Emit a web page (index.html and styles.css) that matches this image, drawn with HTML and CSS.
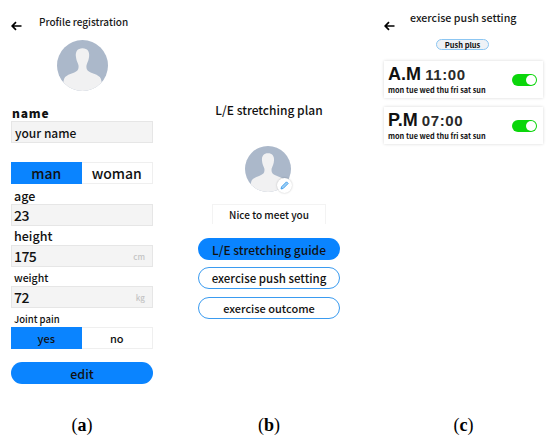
FILE: index.html
```html
<!DOCTYPE html>
<html lang="en">
<head>
    <meta charset="UTF-8">
    <meta name="viewport" content="width=device-width, initial-scale=1.0">
    <title>Stretching app screens</title>
    <link rel="stylesheet" href="styles.css">
</head>
<body>
    <div class="figure">
        <!-- (a) profile -->
        <section class="panel panel-a">
            <div class="top-bar">
                <svg class="back" viewBox="0 0 11 10"><path d="M10.5 5H1.5M5 1.2L1.2 5L5 8.8" fill="none" stroke="#000" stroke-width="1.7"/></svg>
                <h2 class="top-title">Profile registration</h2>
            </div>
            <svg class="avatar avatar-big" viewBox="0 0 50 50">
                <use href="#person"></use>
            </svg>
            <label class="lbl lbl-name">name</label>
            <div class="field field-text">your name</div>
            <div class="toggle toggle-big">
                <span class="on">man</span>
                <span>woman</span>
            </div>
            <label class="lbl lbl-age">age</label>
            <div class="field">23</div>
            <label class="lbl lbl-height">height</label>
            <div class="field">175<span class="unit">cm</span></div>
            <label class="lbl lbl-weight">weight</label>
            <div class="field">72<span class="unit">kg</span></div>
            <label class="lbl lbl-joint">Joint pain</label>
            <div class="toggle toggle-small">
                <span class="on">yes</span>
                <span>no</span>
            </div>
            <button class="pill pill-on pill-edit">edit</button>
            <p class="caption">(<b>a</b>)</p>
        </section>

        <!-- (b) plan menu -->
        <section class="panel panel-b">
            <h2 class="plan-title">L/E stretching plan</h2>
            <div class="avatar-wrap">
                <svg class="avatar avatar-mid" viewBox="0 0 50 50">
                    <use href="#person"></use>
                </svg>
                <span class="edit-badge">
                    <svg viewBox="0 0 12 12"><path d="M2.2 9.8L2.8 7.4L8.2 2L10 3.8L4.6 9.2Z" fill="#9cd0f7" stroke="#3f9bea" stroke-width="1"/></svg>
                </span>
            </div>
            <div class="greeting">Nice to meet you</div>
            <button class="pill pill-on">L/E stretching guide</button>
            <button class="pill pill-line">exercise push setting</button>
            <button class="pill pill-line pill-narrow">exercise outcome</button>
            <p class="caption">(<b>b</b>)</p>
        </section>

        <!-- (c) push setting -->
        <section class="panel panel-c">
            <div class="top-bar top-bar-c">
                <svg class="back" viewBox="0 0 11 10"><path d="M10.5 5H1.5M5 1.2L1.2 5L5 8.8" fill="none" stroke="#000" stroke-width="1.7"/></svg>
                <h2 class="top-title">exercise push setting</h2>
            </div>
            <span class="push-plus">Push plus</span>
            <div class="alarm">
                <div>
                    <div class="alarm-time"><b>A.M</b> <span>11:00</span></div>
                    <div class="alarm-days">mon tue wed thu fri sat sun</div>
                </div>
                <span class="switch"></span>
            </div>
            <div class="alarm">
                <div>
                    <div class="alarm-time"><b>P.M</b> <span>07:00</span></div>
                    <div class="alarm-days">mon tue wed thu fri sat sun</div>
                </div>
                <span class="switch"></span>
            </div>
            <p class="caption">(<b>c</b>)</p>
        </section>
    </div>

    <svg class="defs" width="0" height="0">
        <defs>
            <g id="person">
                <clipPath id="round"><circle cx="25" cy="25" r="25"/></clipPath>
                <circle cx="25" cy="25" r="25" fill="#abb8ca"/>
                <path clip-path="url(#round)" d="M25 8C20 8 18 11.500 18.500 16C18.800 19 19.500 21 20.500 23C21.500 25 21.500 28 20 30C17 33 9 33.500 7 38C6 41 6 44 6 50H44C44 44 44 41 43 38C41 33.500 33 33 30 30C28.500 28 28.500 25 29.500 23C30.500 21 31.200 19 31.500 16C32 11.500 30 8 25 8Z" fill="#f1f1f2"/>
            </g>
        </defs>
    </svg>
</body>
</html>
```

FILE: styles.css
```css
body {
    margin: 0;
    background: #fff;
    color: #111;
    font-family: 'Noto Sans CJK KR', 'Noto Sans', sans-serif;
}

.figure {
    display: flex;
    height: 441px;
    overflow: hidden;
    padding-left: 11px;
}

.panel {
    display: flex;
    flex-direction: column;
    height: 441px;
    box-sizing: border-box;
}

.panel-a {
    width: 142px;
}

.panel-b {
    width: 142px;
    margin-left: 45px;
    padding-top: 100px;
    align-items: center;
}

.panel-c {
    width: 159px;
    margin-left: 44px;
}

.caption {
    margin: auto 0 0;
    padding-bottom: 5px;
    align-self: center;
    font-family: 'Liberation Serif', serif;
    font-size: 18px;
    line-height: 22px;
    color: #000;
}

.top-bar {
    display: flex;
    height: 34px;
    flex-shrink: 0;
}

.back {
    width: 11px;
    height: 10px;
    margin-top: 21px;
}

.top-title {
    margin: 14px 0 0 17px;
    font-size: 10px;
    line-height: 16px;
    font-weight: 500;
    white-space: nowrap;
    color: #1a1a1a;
}

.top-bar-c {
    height: 39px;
}

.top-bar-c .top-title {
    margin: 10px 0 0 15px;
    font-size: 10.700px;
}

.avatar {
    display: block;
    flex-shrink: 0;
}

.avatar-big {
    width: 51px;
    height: 51px;
    margin: 6px 0 0 46px;
}

.lbl {
    display: block;
    font-weight: 500;
    line-height: 16px;
    height: 16px;
    padding-left: 3px;
}

.lbl-name {
    margin-top: 14px;
    padding-left: 1px;
    font-size: 12px;
    font-weight: 900;
    letter-spacing: .8px;
}

.lbl-age, .lbl-height {
    margin-top: 3px;
    font-size: 12.500px;
}

.lbl-age {
    margin-top: 4px;
}

.lbl-height {
    line-height: 14px;
}

.lbl-weight {
    margin-top: 3px;
    font-size: 10.500px;
}

.lbl-joint {
    margin-top: 3px;
    font-size: 9.500px;
}

.field {
    display: flex;
    justify-content: space-between;
    align-items: center;
    height: 22px;
    box-sizing: border-box;
    padding: 0 7px 0 2px;
    background: #f4f4f4;
    border: 1px solid #e6e6e6;
    font-size: 14px;
    font-weight: 500;
    letter-spacing: -.6px;
}

.field-text {
    padding-left: 3px;
    font-size: 12px;
    letter-spacing: 0;
}

.unit {
    font-size: 8px;
    letter-spacing: 0;
    color: #c4c4c4;
}

.toggle {
    display: flex;
    height: 22px;
    box-sizing: border-box;
    background: #fff;
    border: 1px solid #efefef;
    font-weight: 500;
}

.toggle span {
    flex: 1;
    text-align: center;
    line-height: 20px;
}

.toggle .on {
    margin: -1px 0 -1px -1px;
    background: #0a84ff;
    line-height: 22px;
}

.toggle-big {
    margin-top: 19px;
    font-size: 14px;
}

.toggle-small {
    font-size: 11px;
}

.pill {
    display: block;
    width: 142px;
    height: 22px;
    flex-shrink: 0;
    box-sizing: border-box;
    padding: 0;
    border-radius: 11px;
    font-family: inherit;
    font-size: 11.500px;
    font-weight: 500;
    color: #111;
    white-space: nowrap;
}

.pill-on {
    background: #0a84ff;
    border: none;
}

.pill-line {
    margin-top: 7px;
    background: #fff;
    border: 1.500px solid #3a9bf0;
}

.pill-narrow {
    margin-top: 8px;
    font-size: 11px;
}

.pill-edit {
    margin-top: 13px;
    font-size: 12.500px;
}

.plan-title {
    margin: 0;
    font-size: 12px;
    line-height: 20px;
    font-weight: 500;
}

.avatar-wrap {
    position: relative;
    margin: 26px 2px 0 0;
    width: 46px;
    height: 46px;
}

.avatar-mid {
    width: 46px;
    height: 46px;
}

.edit-badge {
    position: absolute;
    right: -1px;
    bottom: -1px;
    display: flex;
    align-items: center;
    justify-content: center;
    width: 15px;
    height: 15px;
    border-radius: 50%;
    background: #fff;
    box-shadow: 0 0 2px rgba(0, 0, 0, .25);
}

.edit-badge svg {
    width: 11px;
    height: 11px;
}

.greeting {
    width: 114px;
    height: 20px;
    margin: 12px 0 14px;
    font-size: 10px;
    font-weight: 500;
    line-height: 20px;
    text-align: center;
    border: solid #f3f3f3;
    border-width: 1px 1px 0;
    box-sizing: border-box;
}

.panel-b .pill-on {
    font-size: 12px;
}

.push-plus {
    align-self: center;
    width: 53px;
    height: 11px;
    box-sizing: border-box;
    margin-left: -2px;
    background: #eef2f6;
    border: 1px solid #8cc6f2;
    border-radius: 6px;
    font-size: 7.500px;
    line-height: 9px;
    font-weight: 700;
    text-align: center;
}

.alarm {
    display: flex;
    justify-content: space-between;
    align-items: center;
    height: 37px;
    margin-top: 11px;
    padding: 0 6px 0 4px;
    box-sizing: border-box;
    background: #fff;
    box-shadow: 0 0 3px rgba(0, 0, 0, .16);
}

.alarm + .alarm {
    margin-top: 9px;
}

.alarm-time {
    font-family: 'Liberation Sans', sans-serif;
    font-size: 15px;
    line-height: 20px;
    white-space: nowrap;
}

.alarm-time b {
    font-size: 18px;
}

.alarm-time span {
    font-weight: 700;
    color: #2a2a2a;
    letter-spacing: .6px;
}

.alarm-days {
    font-size: 7.300px;
    line-height: 10px;
    font-weight: 700;
    white-space: nowrap;
}

.switch {
    position: relative;
    width: 25px;
    height: 12px;
    border-radius: 6px;
    background: #0bd60b;
}

.switch::after {
    content: "";
    position: absolute;
    top: 1px;
    right: 1px;
    width: 10px;
    height: 10px;
    border-radius: 50%;
    background: #fff;
}

.defs {
    position: absolute;
}
```
